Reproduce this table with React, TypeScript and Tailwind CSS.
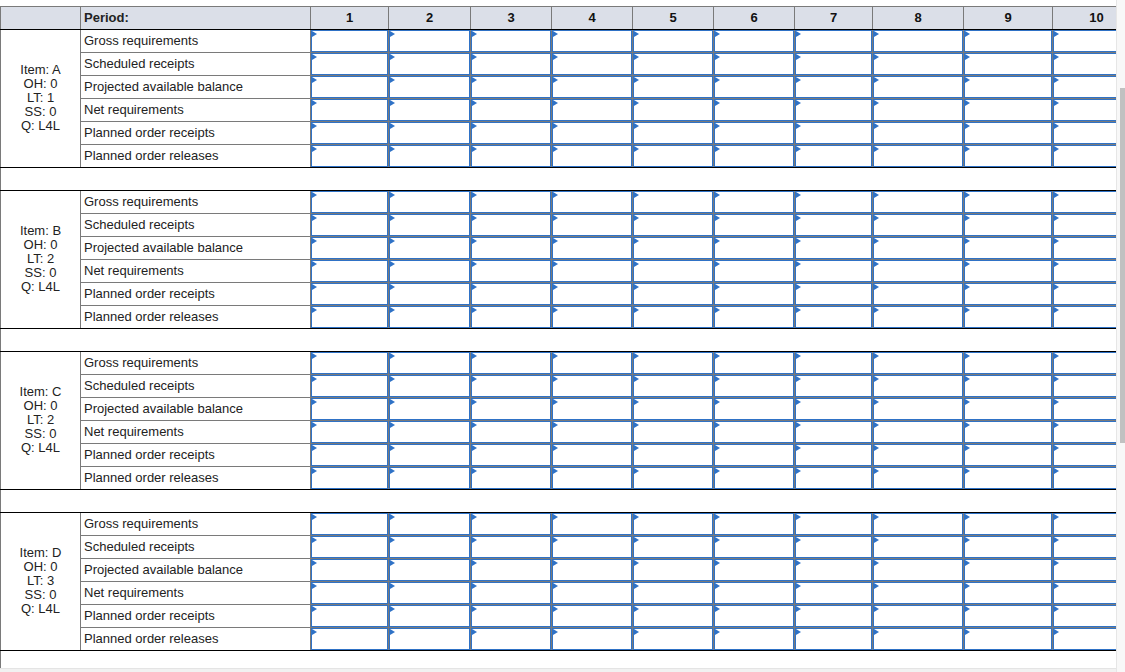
import React from "react";

const periods = [1, 2, 3, 4, 5, 6, 7, 8, 9, 10];
const widths = [78, 82, 81, 81, 81, 81, 78, 91, 89, 88];

const rowLabels = [
  "Gross requirements",
  "Scheduled receipts",
  "Projected available balance",
  "Net requirements",
  "Planned order receipts",
  "Planned order releases",
];

const items = [
  { name: "A", oh: 0, lt: 1, ss: 0, q: "L4L" },
  { name: "B", oh: 0, lt: 2, ss: 0, q: "L4L" },
  { name: "C", oh: 0, lt: 2, ss: 0, q: "L4L" },
  { name: "D", oh: 0, lt: 3, ss: 0, q: "L4L" },
];

function InputCell({ last }: { last: boolean }) {
  return (
    <td
      className={
        "p-0 border border-[#7a7a7a] align-top " +
        (last ? "border-b-black" : "")
      }
    >
      <div className="relative h-[22px] border border-[#2f72c6] bg-white">
        <span className="absolute left-0 top-0 w-0 h-0 border-y-[3px] border-y-transparent border-l-[5px] border-l-[#2f72c6]" />
      </div>
    </td>
  );
}

function ItemBlock({ item }: { item: (typeof items)[number] }) {
  return (
    <>
      {rowLabels.map((label, r) => {
        const last = r === rowLabels.length - 1;
        return (
          <tr key={label} className="h-[23px]">
            {r === 0 && (
              <td
                rowSpan={6}
                className="border border-[#7a7a7a] border-b-black text-center align-middle leading-[14px] pb-[2px]"
              >
                <div>Item: {item.name}</div>
                <div>OH: {item.oh}</div>
                <div>LT: {item.lt}</div>
                <div>SS: {item.ss}</div>
                <div>Q: {item.q}</div>
              </td>
            )}
            <td
              className={
                "border border-[#7a7a7a] px-[3px] align-middle whitespace-nowrap " +
                (last ? "border-b-black" : "")
              }
            >
              {label}
            </td>
            {periods.map((p) => (
              <InputCell key={p} last={last} />
            ))}
          </tr>
        );
      })}
    </>
  );
}

function Spacer() {
  return (
    <tr className="h-[23px]">
      <td
        colSpan={12}
        className="border border-[#7a7a7a] border-y-black"
      />
    </tr>
  );
}

export default function App() {
  return (
    <div className="w-[1125px] h-[672px] flex overflow-hidden bg-white text-[13px] text-[#222] font-['Liberation_Sans',Arial,sans-serif]">
      <div className="w-[1116px] flex flex-col overflow-hidden">
        <div className="flex-1 overflow-hidden pt-[6px]">
          <table className="table-fixed border-collapse w-[1140px]">
            <colgroup>
              <col className="w-[80px]" />
              <col className="w-[230px]" />
              {widths.map((w, i) => (
                <col key={i} style={{ width: w }} />
              ))}
            </colgroup>
            <tbody>
              <tr className="h-[23px] bg-[#dbdfe8]">
                <td className="border border-[#7a7a7a] border-b-black" />
                <td className="border border-[#7a7a7a] border-b-black px-[3px] font-bold">
                  Period:
                </td>
                {periods.map((p) => (
                  <td
                    key={p}
                    className="border border-[#7a7a7a] border-b-black text-center font-bold text-[#111]"
                  >
                    {p}
                  </td>
                ))}
              </tr>
              {items.map((item) => (
                <React.Fragment key={item.name}>
                  <ItemBlock item={item} />
                  <Spacer />
                </React.Fragment>
              ))}
            </tbody>
          </table>
        </div>
        <div className="h-[4px] bg-[#f1f1f1] border-t border-[#e4e4e4]" />
      </div>
      <div className="w-[9px] bg-[#f8f8f8] border-l border-[#e6e6e6] flex justify-end pt-[88px]">
        <div className="w-[5px] h-[355px] bg-[#c1c1c1]" />
      </div>
    </div>
  );
}
